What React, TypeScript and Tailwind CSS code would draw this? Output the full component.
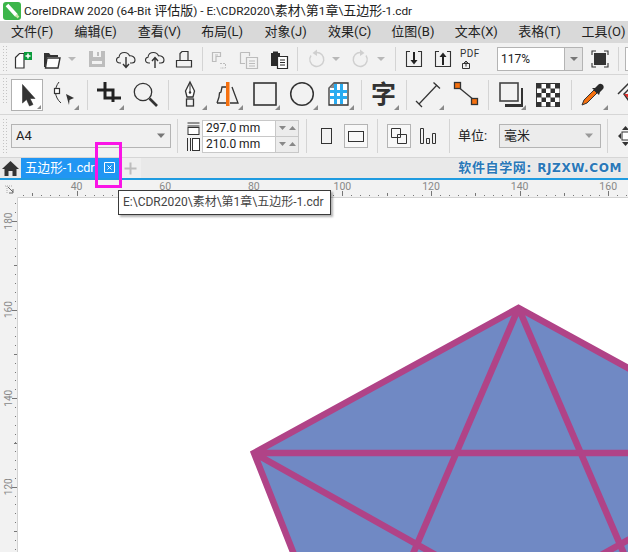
import React from "react";

const menus = ["文件(F)", "编辑(E)", "查看(V)", "布局(L)", "对象(J)", "效果(C)", "位图(B)", "文本(X)", "表格(T)", "工具(O)"];

// Small corner triangle that marks a flyout on toolbox buttons
function Flyout({ x = 27 }: { x?: number }) {
    return <path d={`M${x + 5} 26V31H${x}Z`} fill="#8a8a8a"/>;
}

function Grip() {
    return (
        <svg width="6" height="28" viewBox="0 0 6 28" className="absolute left-[2px] top-[2px]">
            {[0, 1, 2, 3, 4, 5, 6, 7, 8].map(i => (
                <g key={i} fill="#c4c4c4">
                    <rect x="1" y={i * 3 + 1} width="1" height="1"/>
                    <rect x="4" y={i * 3 + 1} width="1" height="1"/>
                </g>
            ))}
        </svg>
    );
}

function Sep({ className }: { className: string }) {
    return <div className={`w-px bg-[#d4d4d4] shrink-0 ${className}`}/>;
}

function Drop({ className }: { className: string }) {
    return (
        <svg width="10" height="24" viewBox="0 0 10 24" className={`shrink-0 ${className}`}>
            <path d="M1 10H9L5 14Z" fill="#b8b8b8"/>
        </svg>
    );
}

function Ico({ className, children }: { className: string; children: React.ReactNode }) {
    return <svg width="24" height="24" viewBox="0 0 24 24" className={`shrink-0 ${className}`}>{children}</svg>;
}

function Tool({ className, children }: { className: string; children: React.ReactNode }) {
    return <svg width="32" height="32" viewBox="0 0 32 32" className={`shrink-0 ${className}`}>{children}</svg>;
}

const cloud = "M7 16H6C3.5 16 2.5 14.5 2.5 13C2.5 11.5 3.5 10.3 5 10.2C5.3 7.5 7.5 5.5 10.5 5.5C13 5.5 14.8 7 15.5 8.8C18.5 8.5 21 10.3 21 13C21 15 19.5 16 18 16H16";

function TopToolbar() {
    return (
        <div className="relative h-[31px] flex items-center bg-[#f2f2f2] border-b border-[#d6d6d6] box-content">
            <Grip/>
            <Ico className="ml-[9px]">
                <path d="M6.5 10.5L10.5 6.5H15V21H6.5Z" fill="#fff" stroke="#333" strokeWidth="1.2"/>
                <rect x="15" y="5" width="8" height="8" fill="#0a9b3c"/>
                <path d="M19 6.5V11.5M16.5 9H21.5" stroke="#fff" strokeWidth="1.5"/>
            </Ico>
            <Ico className="ml-[5px]">
                <path d="M6 6H11L12.5 8H20V10H9L7.5 20H6Z" fill="#333"/>
                <path d="M9 11H22L20 21H7.5Z" fill="#fff" stroke="#333" strokeWidth="1.4"/>
            </Ico>
            <Drop className="ml-[5px]"/>
            <Ico className="ml-[8px]">
                <path d="M4 4H20V20H4Z" fill="#bdbdbd"/>
                <rect x="8" y="4" width="8" height="6" fill="#f2f2f2"/>
                <rect x="12" y="5" width="2" height="4" fill="#bdbdbd"/>
                <rect x="7" y="14" width="10" height="3" fill="#f2f2f2"/>
            </Ico>
            <Ico className="ml-[5px]">
                <path d={cloud} fill="none" stroke="#333" strokeWidth="1.1"/>
                <path d="M12 10V20M9 17L12 20.5L15 17" fill="none" stroke="#333" strokeWidth="1.4"/>
            </Ico>
            <Ico className="ml-[5px]">
                <path d={cloud} fill="none" stroke="#333" strokeWidth="1.1"/>
                <path d="M12 21V11M9 14L12 10.5L15 14" fill="none" stroke="#333" strokeWidth="1.4"/>
            </Ico>
            <Ico className="ml-[5px]">
                <path d="M8 13V6.5L10 4.5H16V13" fill="none" stroke="#333" strokeWidth="1.2"/>
                <path d="M4.5 13.5H19.5V20H4.5Z" fill="none" stroke="#333" strokeWidth="1.2"/>
            </Ico>
            <Sep className="ml-[6px] h-[24px]"/>
            <Ico className="ml-[3px]">
                <path d="M6.5 5.5H14.5V9.5H10V14.5H6.5ZM9 8H12" fill="none" stroke="#bcbcbc" strokeWidth="1.2"/>
                <path d="M14 16.5H19.5V21H14" fill="none" stroke="#bcbcbc" strokeDasharray="2 1"/>
            </Ico>
            <Ico className="ml-[8px]">
                <path d="M2.5 5.5H11.5V9M2.5 5.5V16.5H7" fill="none" stroke="#bcbcbc" strokeWidth="1.2"/>
                <path d="M8.5 10.5H19.5V21.5H8.5ZM11 14H17M11 16.5H17M11 19H17" fill="none" stroke="#bcbcbc" strokeWidth="1.2"/>
            </Ico>
            <Ico className="ml-[5px]">
                <path d="M4 6H6V4.5H11V6H13V19H4Z" fill="#2b2b2b"/>
                <path d="M10.5 9.5H20.5V21.5H10.5Z" fill="#fff" stroke="#2b2b2b" strokeWidth="1.2"/>
                <path d="M13 13H18M13 15.5H18M13 18H18" stroke="#2b2b2b"/>
            </Ico>
            <Sep className="ml-[6px] h-[24px]"/>
            <Ico className="ml-[6px]">
                <path d="M7 8.5A7 7 0 1 0 12 5.5" fill="none" stroke="#cfcfcf" strokeWidth="1.4"/>
                <path d="M13 2.5L8.5 6L13 9Z" fill="#cfcfcf"/>
            </Ico>
            <Drop className="ml-[3px]"/>
            <Ico className="ml-[8px]">
                <path d="M17 8.5A7 7 0 1 1 12 5.5" fill="none" stroke="#cfcfcf" strokeWidth="1.4"/>
                <path d="M11 2.5L15.5 6L11 9Z" fill="#cfcfcf"/>
            </Ico>
            <Drop className="ml-[3px]"/>
            <Sep className="ml-[9px] h-[24px]"/>
            <Ico className="ml-[6px]">
                <path d="M8 4.5H4.5V19.5H19.5V4.5H16" fill="none" stroke="#333" strokeWidth="1.1"/>
                <path d="M12 5V14" stroke="#222" strokeWidth="2"/>
                <path d="M8.5 13H15.5L12 17.5Z" fill="#222"/>
            </Ico>
            <Ico className="ml-[5px]">
                <path d="M8 4.5H4.5V19.5H19.5V4.5H16" fill="none" stroke="#333" strokeWidth="1.1"/>
                <path d="M12 18V9" stroke="#222" strokeWidth="2"/>
                <path d="M8.5 10H15.5L12 5.5Z" fill="#222"/>
            </Ico>
            <div className="relative w-[24px] h-[24px] ml-[5px] shrink-0">
                <span className="absolute left-0 top-[1px] text-[10px] leading-[12px] text-[#333] tracking-[0.5px]">PDF</span>
                <svg width="10" height="9" viewBox="0 0 10 9" className="absolute left-[1px] top-[13px]">
                    <path d="M1.5 3.5H8.5V8.5H1.5ZM5 1V6.5M3 3L5 1L7 3" fill="none" stroke="#333"/>
                </svg>
            </div>
            <div className="ml-[13px] w-[86px] h-[24px] flex border border-[#b4b4b4] bg-white shrink-0">
                <span className="flex-1 pl-[3px] text-[12px] leading-[22px] text-[#222]">117%</span>
                <div className="w-[18px] bg-[#e4e4e4] border-l border-[#b4b4b4] flex items-center justify-center">
                    <svg width="10" height="6" viewBox="0 0 10 6"><path d="M1 1H9L5 5Z" fill="#777"/></svg>
                </div>
            </div>
            <Ico className="ml-[5px]">
                <path d="M4 8V4H8M16 4H20V8M4 16V20H8M16 20H20V16" fill="none" stroke="#333" strokeWidth="1.1"/>
                <rect x="6" y="6" width="12" height="12" fill="#333"/>
            </Ico>
            <Sep className="ml-[6px] h-[24px]"/>
            <div className="ml-[6px] w-[4px] h-[24px] border-l border-y border-[#b4b4b4] bg-white shrink-0"/>
        </div>
    );
}

function ToolBox() {
    return (
        <div className="relative h-[39px] flex items-center bg-[#f2f2f2] border-b border-[#d6d6d6] box-content">
            <Grip/>
            <div className="ml-[11px] w-[32px] h-[32px] border border-[#b0b0b0] bg-white shrink-0 relative">
                <svg width="30" height="30" viewBox="0 0 30 30" className="absolute left-0 top-0">
                    <path d="M10.5 4.5V23L14.5 19.5L17.5 26L21 24.5L18 18.5H23Z" fill="#333" stroke="#333" strokeWidth="0.6"/>
                    <path d="M29 25V29H25Z" fill="#8a8a8a"/>
                </svg>
            </div>
            <Tool className="ml-[7px]">
                <path d="M9 3C4 9 4 18 11 24" fill="none" stroke="#333" strokeWidth="1"/>
                <rect x="4.5" y="9.5" width="5" height="5" fill="#fff" stroke="#333" strokeWidth="1.2"/>
                <path d="M16 15L24 19L19.5 21L19 26Z" fill="#333"/>
                <Flyout x={24}/>
            </Tool>
            <Sep className="ml-[5px] h-[30px]"/>
            <Tool className="ml-[5px]">
                <path d="M4 11H20V23" fill="none" stroke="#222" strokeWidth="3"/>
                <path d="M12 3V19H28" fill="none" stroke="#222" strokeWidth="3"/>
                <Flyout x={26}/>
            </Tool>
            <Tool className="ml-[5px]">
                <circle cx="13" cy="13" r="8.7" fill="none" stroke="#333" strokeWidth="1.3"/>
                <path d="M19.5 19.5L27 27" stroke="#333" strokeWidth="2.6"/>
            </Tool>
            <Sep className="ml-[6px] h-[30px]"/>
            <Tool className="ml-[7px]">
                <path d="M14 3L18.5 12L17 18H11L9.5 12Z" fill="#fff" stroke="#333" strokeWidth="1.3"/>
                <path d="M14 4V13" stroke="#333"/>
                <circle cx="14" cy="13.5" r="1.2" fill="#333"/>
                <rect x="10.5" y="20" width="7" height="7" fill="none" stroke="#333" strokeWidth="1.3"/>
                <Flyout x={26}/>
            </Tool>
            <Tool className="ml-[4px]">
                <path d="M5 24H14M18 24H26L20 8" fill="none" stroke="#333" strokeWidth="1.3"/>
                <path d="M5 24L7 18L7.5 14L9 13L10 8H14" fill="none" stroke="#333" strokeWidth="1.3"/>
                <rect x="14" y="3" width="3.5" height="24" fill="#f5700f"/>
                <Flyout x={26}/>
            </Tool>
            <Tool className="ml-[5px]">
                <rect x="5" y="4" width="22" height="22" fill="none" stroke="#333" strokeWidth="1.6"/>
                <Flyout x={26}/>
            </Tool>
            <Tool className="ml-[6px]">
                <circle cx="15" cy="15" r="11.3" fill="none" stroke="#333" strokeWidth="1.5"/>
                <Flyout x={26}/>
            </Tool>
            <Tool className="ml-[4px]">
                <path d="M11 4H25V26H6V9Z" fill="#fff" stroke="#333" strokeWidth="1.3"/>
                <path d="M7 11H24V14H7ZM7 17H24V20H7Z" fill="#29abf0"/>
                <path d="M11 5H14V25H11ZM17 5H20V25H17Z" fill="#29abf0"/>
                <path d="M6 9H11V4Z" fill="#888"/>
                <Flyout x={26}/>
            </Tool>
            <Sep className="ml-[6px] h-[30px]"/>
            <div className="relative ml-[5px] w-[32px] h-[32px] shrink-0">
                <span className="absolute left-[4px] top-[1px] text-[25px] leading-[30px] font-bold text-[#333]">字</span>
                <svg width="32" height="32" viewBox="0 0 32 32" className="absolute left-0 top-0"><Flyout x={27}/></svg>
            </div>
            <Sep className="ml-[7px] h-[30px]"/>
            <Tool className="ml-[6px]">
                <path d="M6 25L24 6" stroke="#333" strokeWidth="1.2"/>
                <path d="M20.5 3.5L27 9.5M3 22L9 28" stroke="#333" strokeWidth="1.3"/>
                <Flyout x={26}/>
            </Tool>
            <Tool className="ml-[5px]">
                <path d="M7 7L24 21" stroke="#333" strokeWidth="1.3"/>
                <rect x="4.5" y="3.5" width="6" height="6" fill="#f5700f" stroke="#333" strokeWidth="1.3"/>
                <rect x="21.5" y="19.5" width="6" height="6" fill="#f5700f" stroke="#333" strokeWidth="1.3"/>
            </Tool>
            <Sep className="ml-[6px] h-[30px]"/>
            <Tool className="ml-[6px]">
                <rect x="5" y="4" width="18" height="18" fill="#f2f2f2" stroke="#444" strokeWidth="1.6"/>
                <path d="M26 9H28V28H10V25H26Z" fill="#333"/>
                <Flyout x={26}/>
            </Tool>
            <Tool className="ml-[5px]">
                <rect x="4" y="4" width="24" height="24" fill="#333"/>
                {[0, 1, 2, 3, 4].map(r => [0, 1, 2, 3, 4].map(c => (r + c) % 2 === 1 && (
                    <rect key={`${r}-${c}`} x={5 + c * 4.5} y={5 + r * 4.5} width="4.5" height="4.5" fill="#fff"/>
                )))}
            </Tool>
            <Sep className="ml-[7px] h-[30px]"/>
            <Tool className="ml-[5px]">
                <path d="M5 26L7 21L17 11L20 14L10 24Z" fill="#f5700f" stroke="#333"/>
                <path d="M15 9L22 16L23 13L26 10C28.5 7 24 3 21.5 5.5L18 9Z" fill="#2a2a2a"/>
                <Flyout x={26}/>
            </Tool>
            <Tool className="ml-[5px]">
                <path d="M4 15L15 4V10L10 15L15 22L22 15" fill="none" stroke="#333" strokeWidth="1.5"/>
                <path d="M10 15H20L15 20Z" fill="#e5322d"/>
            </Tool>
        </div>
    );
}

function Spin() {
    return (
        <div className="w-[23px] flex items-center justify-center gap-[3px] bg-[#ececec] border-l border-[#c8c8c8]">
            <svg width="7" height="4" viewBox="0 0 7 4"><path d="M0 0H7L3.5 4Z" fill="#888"/></svg>
            <svg width="7" height="4" viewBox="0 0 7 4"><path d="M0 4H7L3.5 0Z" fill="#888"/></svg>
        </div>
    );
}

function PropertyBar() {
    return (
        <div className="relative h-[42px] flex items-center bg-[#f2f2f2] border-b border-[#d6d6d6] box-content">
            <svg width="6" height="36" viewBox="0 0 6 36" className="absolute left-[2px] top-[3px]">
                {[0, 1, 2, 3, 4, 5, 6, 7, 8, 9, 10, 11].map(i => (
                    <g key={i} fill="#c4c4c4">
                        <rect x="1" y={i * 3 + 1} width="1" height="1"/>
                        <rect x="4" y={i * 3 + 1} width="1" height="1"/>
                    </g>
                ))}
            </svg>
            <div className="ml-[11px] w-[160px] h-[24px] flex items-center justify-between pl-[4px] pr-[4px] border border-[#b4b4b4] bg-[#f0f0f0] shrink-0">
                <span className="text-[13px] text-[#222]">A4</span>
                <svg width="10" height="6" viewBox="0 0 10 6"><path d="M1 0.5H9L5 5Z" fill="#777"/></svg>
            </div>
            <Sep className="ml-[6px] h-[34px]"/>
            <div className="ml-[8px] w-[15px] h-[32px] shrink-0">
                <svg width="15" height="32" viewBox="0 0 15 32">
                    <path d="M1.5 3H13.5M1.5 6H13.5" stroke="#333" fill="none"/>
                    <rect x="2" y="7.5" width="11" height="7" fill="#fff" stroke="#333"/>
                    <path d="M1.5 18V31M4.5 18V31" stroke="#333"/>
                    <rect x="6.5" y="18.5" width="7" height="12" fill="#fff" stroke="#333"/>
                </svg>
            </div>
            <div className="ml-[1px] w-[97px] h-[33px] flex flex-col border border-[#c8c8c8] shrink-0 bg-white">
                <div className="flex h-[16px] border-b border-[#c8c8c8]">
                    <span className="flex-1 pl-[3px] text-[12px] leading-[15px] text-[#222] whitespace-nowrap">297.0 mm</span>
                    <Spin/>
                </div>
                <div className="flex flex-1">
                    <span className="flex-1 pl-[3px] text-[12px] leading-[15px] text-[#222] whitespace-nowrap">210.0 mm</span>
                    <Spin/>
                </div>
            </div>
            <Sep className="ml-[7px] h-[34px]"/>
            <div className="ml-[14px] w-[11px] h-[16px] border border-[#333] shrink-0"/>
            <div className="ml-[12px] w-[24px] h-[24px] flex items-center justify-center border border-[#b4b4b4] bg-[#f8f8f8] shrink-0">
                <div className="w-[16px] h-[11px] border border-[#333]"/>
            </div>
            <Sep className="ml-[9px] h-[34px]"/>
            <div className="ml-[9px] w-[24px] h-[24px] flex items-center justify-center border border-[#b4b4b4] bg-[#f8f8f8] shrink-0">
                <svg width="18" height="18" viewBox="0 0 18 18">
                    <path d="M1.5 1.5H10.5V10.5H1.5ZM7.5 7.5H16.5V16.5H7.5Z" fill="none" stroke="#333"/>
                </svg>
            </div>
            <svg width="18" height="18" viewBox="0 0 18 18" className="ml-[8px] shrink-0">
                <path d="M1.5 1.5H4.5V16.5H1.5ZM7.5 11.5H10.5V16.5H7.5ZM13.5 6.5H16.5V16.5H13.5Z" fill="none" stroke="#333"/>
            </svg>
            <Sep className="ml-[12px] h-[34px]"/>
            <span className="ml-[8px] w-[33px] text-[13px] text-[#222] whitespace-nowrap shrink-0">单位:</span>
            <div className="ml-[8px] w-[102px] h-[24px] flex items-center justify-between pl-[4px] pr-[6px] border border-[#b4b4b4] bg-[#ececec] shrink-0">
                <span className="text-[13px] text-[#222]">毫米</span>
                <svg width="10" height="6" viewBox="0 0 10 6"><path d="M1 0.5H9L5 5Z" fill="#999"/></svg>
            </div>
            <Sep className="ml-[6px] h-[34px]"/>
            <svg width="12" height="20" viewBox="0 0 12 20" className="ml-[10px] shrink-0">
                <rect x="4" y="6" width="7" height="8" fill="#fff" stroke="#333"/>
                <path d="M7.5 0L11 4H4ZM7.5 20L11 16H4ZM0 10L3 7V13Z" fill="#333"/>
            </svg>
        </div>
    );
}

function TabBar() {
    return (
        <div className="h-[20px] flex items-stretch bg-[#e9e9e9] border-b-2 border-[#1f9be0] box-content">
            <div className="w-[21px] flex items-center justify-center shrink-0">
                <svg width="17" height="17" viewBox="0 0 17 17">
                    <path d="M8.5 1L17 9H14.5V16H10.5V11H6.5V16H2.5V9H0Z" fill="#333"/>
                </svg>
            </div>
            <div className="w-[99px] bg-[#2196f3] flex items-center shrink-0">
                <span className="ml-[4px] w-[71px] text-[12.6px] leading-[20px] text-white whitespace-nowrap">五边形-1.cdr</span>
                <svg width="12" height="12" viewBox="0 0 12 12" className="ml-[8px]">
                    <path d="M0.5 0.5H10.5V10.5H0.5Z" fill="none" stroke="#fff"/>
                    <path d="M3.5 3.5L7.5 7.5M7.5 3.5L3.5 7.5" stroke="#fff"/>
                </svg>
            </div>
            <div className="w-[21px] bg-[#efefef] flex items-center justify-center shrink-0">
                <svg width="13" height="13" viewBox="0 0 13 13"><path d="M6.5 0.5V12.5M0.5 6.5H12.5" stroke="#bdbdbd" strokeWidth="2"/></svg>
            </div>
            <span className="ml-auto mr-[6px] font-['DejaVu_Sans','Noto_Sans_CJK_SC',sans-serif] text-[12px] leading-[20px] font-bold tracking-[0.6px] text-[#2a78b8] whitespace-nowrap [text-shadow:0_0_2px_#fff]">
                <span className="text-[13px] mr-[5px]">软件自学网:</span>RJZXW.COM
            </span>
        </div>
    );
}

const hLabels = [[76.6, "40"], [165.2, "60"], [253.8, "80"], [342.4, "100"], [431, "120"], [519.6, "140"], [608.2, "160"]] as const;
const vLabels = [[220, "180"], [308.6, "160"], [397.2, "140"], [485.8, "120"]] as const;

function HRuler() {
    const dots = Array.from({ length: 70 }, (_, i) => 23.4 + i * 8.86);
    const halves = [32.3, 120.9, 209.5, 298.1, 386.7, 475.3, 563.9];
    return (
        <svg width="628" height="18" viewBox="0 179 628 18" className="block shrink-0">
            <rect x="0" y="179" width="628" height="18" fill="#f2f2f2"/>
            <path d="M17.5 196.5H628" stroke="#d2d2d2"/>
            {dots.map(x => <rect key={x} x={Math.round(x)} y="194" width="1" height="1" fill="#777"/>)}
            {halves.map(x => <rect key={x} x={Math.round(x)} y="192" width="1" height="3" fill="#777"/>)}
            {hLabels.map(([x, t]) => (
                <g key={t}>
                    <rect x={Math.round(x)} y="190" width="1" height="5" fill="#777"/>
                    <text x={x} y="189" textAnchor="middle" fontSize="10.5" fill="#888">{t}</text>
                </g>
            ))}
            <path d="M5 185H13M7 185V193" stroke="#aaa" strokeDasharray="1 1" fill="none"/>
            <path d="M8 186L13 191M13 188V192H9" stroke="#666" fill="none"/>
        </svg>
    );
}

function VRuler() {
    const dots = Array.from({ length: 40 }, (_, i) => 202.2 + i * 8.86);
    const halves = [264.3, 352.9, 441.5, 530.1];
    return (
        <svg width="18" height="355" viewBox="0 197 18 355" className="block shrink-0">
            <rect x="0" y="197" width="18" height="355" fill="#f2f2f2"/>
            <path d="M17.5 197V552" stroke="#d2d2d2"/>
            {dots.map(y => <rect key={y} x="15" y={Math.round(y)} width="1" height="1" fill="#777"/>)}
            {halves.map(y => <rect key={y} x="14" y={Math.round(y)} width="3" height="1" fill="#777"/>)}
            {vLabels.map(([y, t]) => (
                <g key={t}>
                    <rect x="12" y={Math.round(y)} width="5" height="1" fill="#777"/>
                    <text x="0" y="0" transform={`translate(11.5 ${y}) rotate(-90)`} textAnchor="middle" fontSize="10" fill="#888">{t}</text>
                </g>
            ))}
        </svg>
    );
}

export default function App() {
    return (
        <div className="relative w-[628px] h-[552px] overflow-hidden bg-white font-['Roboto','Noto_Sans_CJK_SC',sans-serif]">
            <div className="h-[21px] flex items-center bg-white">
                <svg width="18" height="18" viewBox="0 0 18 18" className="ml-[3px] shrink-0">
                    <rect x="0" y="0" width="18" height="18" rx="3" fill="#3cb54a"/>
                    <path d="M4 3L13.5 13.5" stroke="#fff" strokeWidth="3.6"/>
                    <path d="M13 13L15.5 15.5" stroke="#c9e8a8" strokeWidth="2.5"/>
                </svg>
                <span className="ml-[3px] text-[11.8px] leading-[21px] text-[#222] whitespace-nowrap">
                    CorelDRAW 2020 (64-Bit <span className="text-[13px]">评估版</span>) - E:\CDR2020\<span className="text-[13px]">素材</span>\<span className="text-[13px]">第</span>1<span className="text-[13px]">章</span>\<span className="text-[13px]">五边形</span>-1.cdr
                </span>
            </div>
            <div className="h-[22px] flex items-center gap-[22px] pl-[11px] bg-[#d9d9d9]">
                {menus.map(m => (
                    <span key={m} className="w-[41.4px] text-[13px] leading-[22px] text-[#222] whitespace-nowrap shrink-0">{m}</span>
                ))}
            </div>
            <TopToolbar/>
            <ToolBox/>
            <PropertyBar/>
            <TabBar/>
            <HRuler/>
            <div className="flex h-[355px]">
                <VRuler/>
                <svg width="610" height="355" viewBox="18 197 610 355" className="block shrink-0">
                    <path d="M518.5 307L783 452L697 670H340L254 452Z" fill="#7089c4"/>
                    <path d="M783 452L518.5 307L254 452L340 670M518.5 307L397 590M518.5 307L640 590M254 452H783M254 452L500 590M783 452L537 590"
                          fill="none" stroke="#b04387" strokeWidth="6.5" strokeLinejoin="miter"/>
                </svg>
            </div>
            <div className="absolute left-[95px] top-[142px] w-[27px] h-[46px] border-[3px] border-[#fa14e6]"/>
            <div className="absolute left-[118px] top-[190px] w-[213px] h-[25px] pl-[4px] border border-[#3a3a3a] bg-white shadow-[2px_2px_2px_rgba(0,0,0,0.3)] text-[12px] leading-[23px] text-[#444] whitespace-nowrap">
                E:\CDR2020\素材\第1章\五边形-1.cdr
            </div>
        </div>
    );
}
